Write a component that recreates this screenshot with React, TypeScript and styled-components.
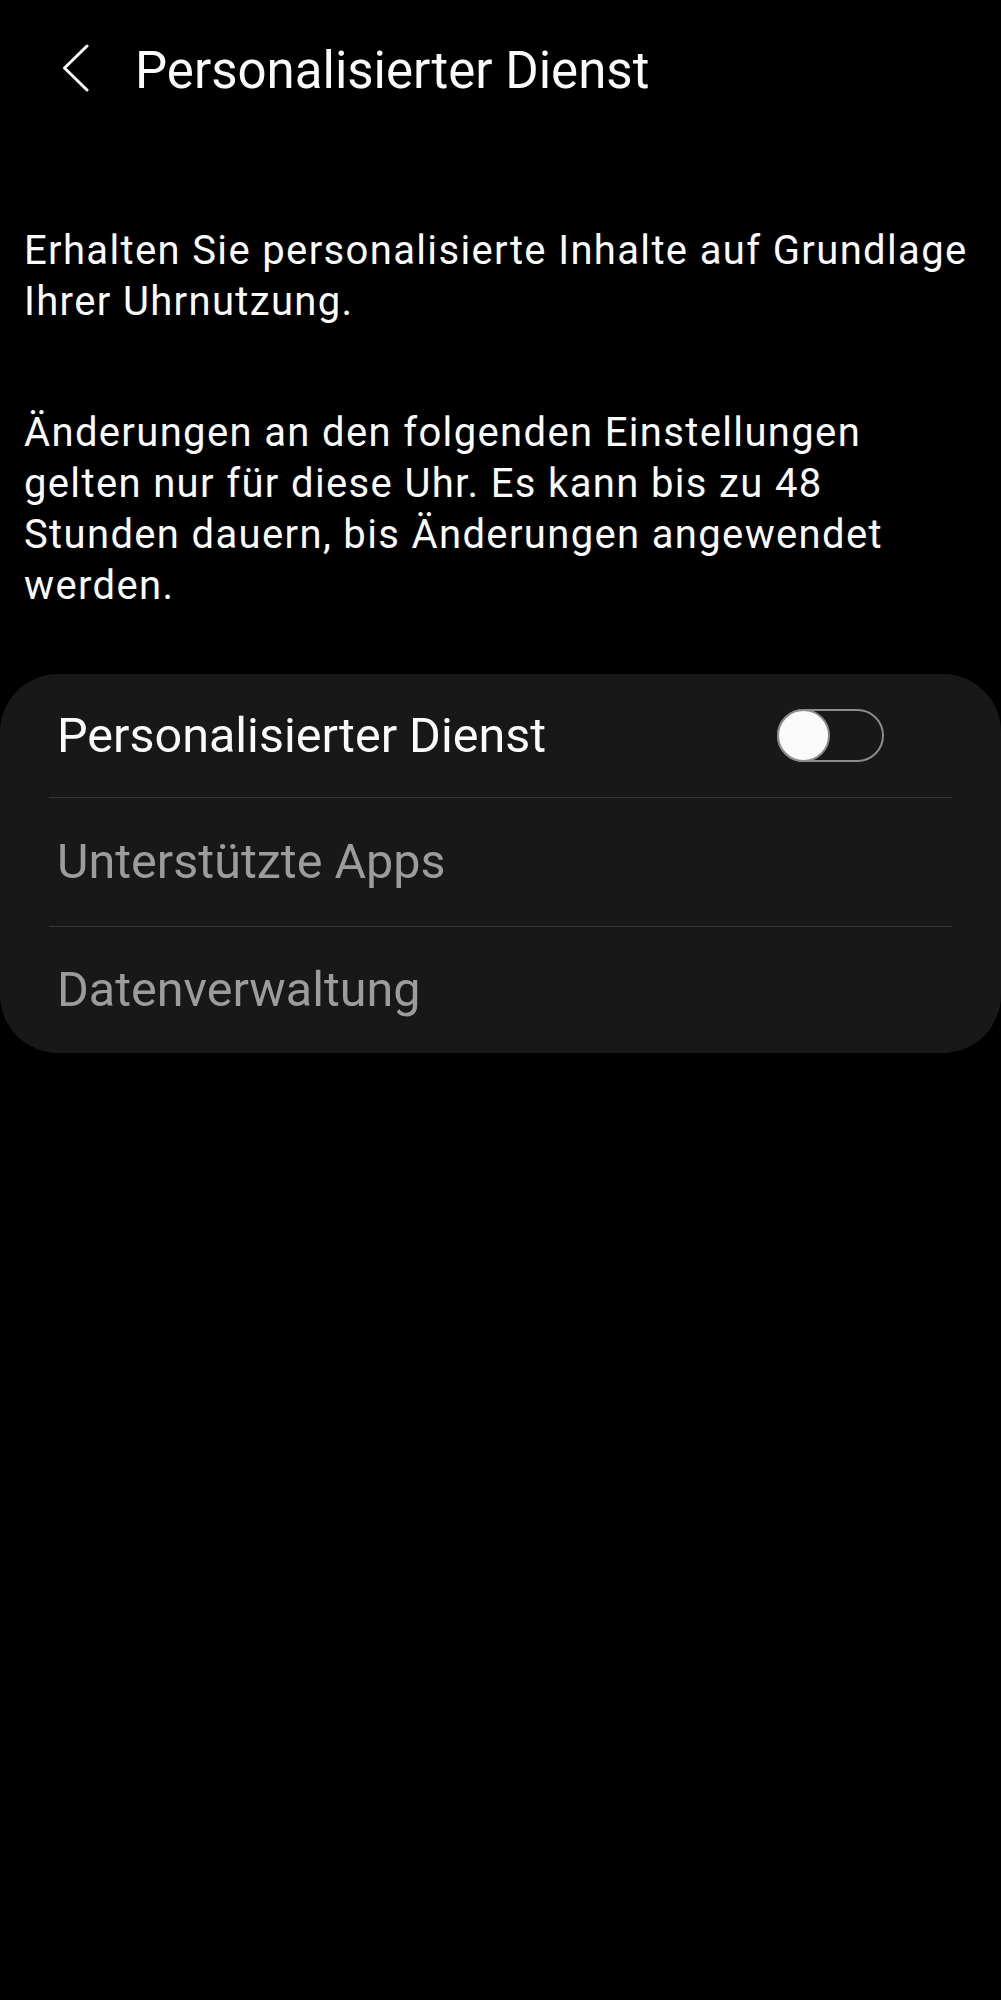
import React from "react";
import styled, { createGlobalStyle } from "styled-components";

const GlobalStyle = createGlobalStyle`
  html, body {
    margin: 0;
    padding: 0;
    background: #000;
  }
  body {
    font-family: Roboto, "Noto Sans", "Liberation Sans", sans-serif;
    color: #fafafa;
    -webkit-font-smoothing: antialiased;
  }
`;

const Screen = styled.div`
  width: 1001px;
  min-height: 2000px;
  background: #000;
  display: flex;
  flex-direction: column;
`;

const Header = styled.header`
  display: flex;
  align-items: center;
  height: 60px;
  padding: 41px 0 0 63px;
  gap: 42px;
`;

const BackButton = styled.button`
  display: flex;
  align-items: center;
  justify-content: center;
  width: 30px;
  height: 60px;
  padding: 0;
  border: none;
  background: transparent;
  color: #fafafa;
`;

const Title = styled.h1`
  margin: 0;
  font-size: 51px;
  line-height: 60px;
  font-weight: 400;
  color: #fafafa;
  white-space: nowrap;
`;

const Intro = styled.section`
  display: flex;
  flex-direction: column;
  gap: 80px;
  padding: 124px 0 0 24px;
`;

const Paragraph = styled.p`
  margin: 0;
  font-size: 40px;
  line-height: 51px;
  letter-spacing: 1.35px;
  font-weight: 400;
  color: #fafafa;
  white-space: pre-line;
`;

const Card = styled.section`
  margin-top: 63px;
  background: #181818;
  border-radius: 58px;
  padding: 0 49px;
  display: flex;
  flex-direction: column;
`;

const Row = styled.div<{ $divider?: boolean; $height: number }>`
  display: flex;
  align-items: center;
  justify-content: space-between;
  height: ${(p) => p.$height}px;
  padding: 0 68px 0 8px;
  border-top: ${(p) => (p.$divider ? "1px solid #363636" : "none")};
`;

const RowLabel = styled.span<{ $muted?: boolean }>`
  font-size: 48.5px;
  line-height: 56px;
  font-weight: 400;
  color: ${(p) => (p.$muted ? "#9c9c9c" : "#fafafa")};
  white-space: nowrap;
`;

const Track = styled.div`
  position: relative;
  box-sizing: border-box;
  width: 107px;
  height: 53px;
  border: 2px solid #8c8c8c;
  border-radius: 27px;
  background: transparent;
`;

const Thumb = styled.div`
  position: absolute;
  left: -2px;
  top: -2px;
  box-sizing: border-box;
  width: 53px;
  height: 53px;
  border-radius: 50%;
  border: 2px solid #8c8c8c;
  background: #fafafa;
`;

function ChevronLeft() {
  return (
    <svg width="30" height="60" viewBox="0 0 30 60" fill="none">
      <polyline
        points="24,5 1.5,27 24,49"
        stroke="#fafafa"
        strokeWidth="3"
        strokeLinecap="round"
        strokeLinejoin="round"
      />
    </svg>
  );
}

const para1 = "Erhalten Sie personalisierte Inhalte auf Grundlage\nIhrer Uhrnutzung.";
const para2 =
  "Änderungen an den folgenden Einstellungen\ngelten nur für diese Uhr. Es kann bis zu 48\nStunden dauern, bis Änderungen angewendet\nwerden.";

export default function App() {
  return (
    <>
      <GlobalStyle />
      <Screen>
        <Header>
          <BackButton aria-label="Zurück">
            <ChevronLeft />
          </BackButton>
          <Title>Personalisierter Dienst</Title>
        </Header>
        <Intro>
          <Paragraph>{para1}</Paragraph>
          <Paragraph>{para2}</Paragraph>
        </Intro>
        <Card>
          <Row $height={123}>
            <RowLabel>Personalisierter Dienst</RowLabel>
            <Track>
              <Thumb />
            </Track>
          </Row>
          <Row $divider $height={128}>
            <RowLabel $muted>Unterstützte Apps</RowLabel>
          </Row>
          <Row $divider $height={126}>
            <RowLabel $muted>Datenverwaltung</RowLabel>
          </Row>
        </Card>
      </Screen>
    </>
  );
}
